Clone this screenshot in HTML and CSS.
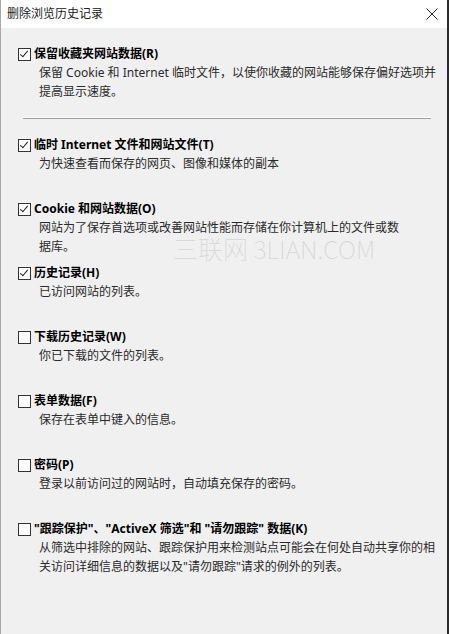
FILE: index.html
```html
<!DOCTYPE html>
<html lang="zh-CN">
<head>
    <meta charset="UTF-8">
    <meta name="viewport" content="width=device-width, initial-scale=1.0">
    <title>删除浏览历史记录</title>
    <link rel="stylesheet" href="styles.css">
</head>
<body>
    <div class="dialog">
        <div class="titlebar">
            <span class="title">删除浏览历史记录</span>
            <svg class="close" width="12" height="12" viewBox="0 0 12 12">
                <path d="M0.5 0.5 L11.5 11.5 M11.5 0.5 L0.5 11.5" stroke="#222" stroke-width="1" fill="none"/>
            </svg>
        </div>

        <div class="content">
            <div class="option first">
                <label class="option-row"><span class="box checked"></span>保留收藏夹网站数据(R)</label>
                <div class="option-desc">保留 Cookie 和 Internet 临时文件，以使你收藏的网站能够保存偏好选项并<br>提高显示速度。</div>
            </div>

            <div class="separator"></div>

            <div class="option">
                <label class="option-row"><span class="box checked"></span>临时 Internet 文件和网站文件(T)</label>
                <div class="option-desc">为快速查看而保存的网页、图像和媒体的副本</div>
            </div>

            <div class="option">
                <label class="option-row"><span class="box checked"></span>Cookie 和网站数据(O)</label>
                <div class="option-desc">网站为了保存首选项或改善网站性能而存储在你计算机上的文件或数<br>据库。</div>
            </div>

            <div class="option">
                <label class="option-row"><span class="box checked"></span>历史记录(H)</label>
                <div class="option-desc">已访问网站的列表。</div>
            </div>

            <div class="option">
                <label class="option-row"><span class="box"></span>下载历史记录(W)</label>
                <div class="option-desc">你已下载的文件的列表。</div>
            </div>

            <div class="option">
                <label class="option-row"><span class="box"></span>表单数据(F)</label>
                <div class="option-desc">保存在表单中键入的信息。</div>
            </div>

            <div class="option">
                <label class="option-row"><span class="box"></span>密码(P)</label>
                <div class="option-desc">登录以前访问过的网站时，自动填充保存的密码。</div>
            </div>

            <div class="option">
                <label class="option-row"><span class="box"></span>"跟踪保护"、"ActiveX 筛选"和 "请勿跟踪" 数据(K)</label>
                <div class="option-desc">从筛选中排除的网站、跟踪保护用来检测站点可能会在何处自动共享你的相<br>关访问详细信息的数据以及"请勿跟踪"请求的例外的列表。</div>
            </div>
        </div>

        <div class="watermark">三联网 3LIAN.COM</div>
    </div>
</body>
</html>
```

FILE: styles.css
```css
body {
    margin: 0;
    font-family: "Noto Sans", "Noto Sans CJK SC", sans-serif;
    font-size: 12px;
    color: #000;
}

.dialog {
    position: relative;
    width: 449px;
    height: 634px;
    box-sizing: border-box;
    background: #f0f0f0;
    border-left: 1px solid #a8a8a8;
    border-right: 2px solid #2b2b2b;
    overflow: hidden;
}

.titlebar {
    height: 28px;
    background: #fff;
    display: flex;
    align-items: center;
    justify-content: space-between;
    padding: 0 9px 0 6px;
}

.title {
    color: #222;
    line-height: 28px;
}

.close {
    display: block;
    margin-bottom: 1px;
}

.content {
    padding: 17px 0 0 17px;
}

.option {
    height: 64px;
}

.option.first {
    height: auto;
}

.option-row {
    display: flex;
    align-items: center;
    gap: 3px;
    height: 18px;
    line-height: 18px;
    font-weight: bold;
    white-space: nowrap;
}

.box {
    position: relative;
    width: 11px;
    height: 11px;
    border: 1px solid #333;
    background: #fff;
    flex-shrink: 0;
}

.box.checked::after {
    content: '';
    position: absolute;
    left: 3px;
    top: 0;
    width: 3px;
    height: 7px;
    border-right: 1px solid #222;
    border-bottom: 1px solid #222;
    transform: rotate(40deg);
}

.option-desc {
    padding-left: 21px;
    line-height: 19px;
    color: #2a2a2a;
    white-space: nowrap;
}

.separator {
    margin: 16px 0 17px 5px;
    width: 408px;
    border-top: 1px solid #fff;
    border-bottom: 1px solid #a0a0a0;
}

.watermark {
    position: absolute;
    left: 172px;
    top: 239px;
    font-family: "Noto Sans CJK SC", sans-serif;
    font-size: 25px;
    line-height: 18px;
    font-weight: 100;
    color: #d6d6d6;
    white-space: nowrap;
}
```
